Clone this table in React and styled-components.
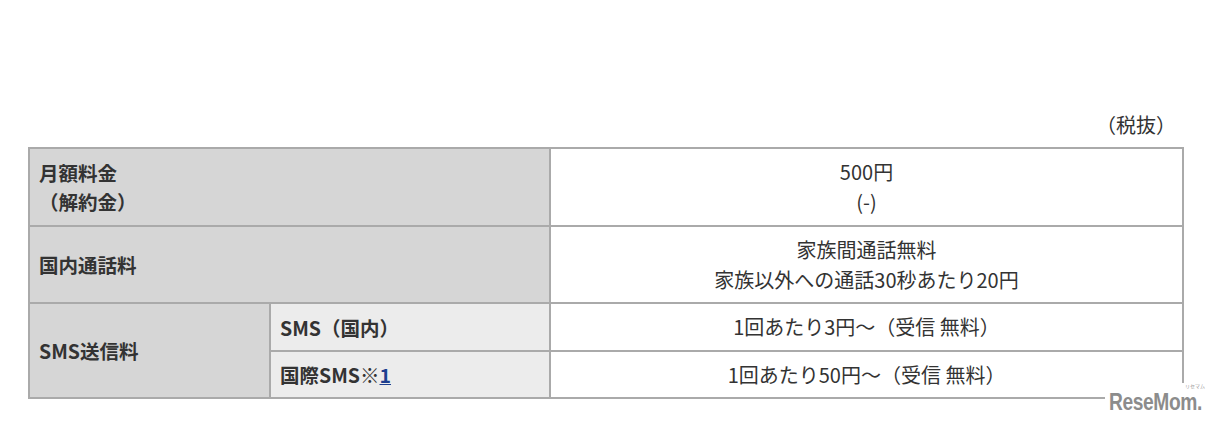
import React from 'react';
import styled, { createGlobalStyle } from 'styled-components';

const GlobalStyle = createGlobalStyle`
	html, body {
		margin: 0;
		padding: 0;
		background: #fff;
	}
	body {
		font-family: "Noto Sans CJK JP", "Noto Sans", sans-serif;
		color: #333;
	}
`;

const Page = styled.div`
	position: relative;
	width: 1217px;
	height: 425px;
	padding: 110px 0 0 28px;
	box-sizing: border-box;
	overflow: hidden;
`;

const Note = styled.div`
	width: 1154px;
	text-align: right;
	font-size: 20px;
	line-height: 30px;
	padding-right: 6px;
	box-sizing: border-box;
	margin-bottom: 7px;
	font-weight: 400;
`;

const PriceTable = styled.table`
	width: 1154px;
	border-collapse: collapse;
	table-layout: fixed;
	border: 2px solid #aaa;
`;

const Th = styled.th`
	background: ${props => (props.sub ? '#ececec' : '#d6d6d6')};
	border: 2px solid #aaa;
	text-align: left;
	font-weight: 700;
	font-size: 19.5px;
	line-height: 29px;
	padding: 0 9px;
	height: ${props => props.h}px;
	color: #333;
	vertical-align: middle;
`;

const Td = styled.td`
	background: #fff;
	border: 2px solid #aaa;
	text-align: center;
	font-weight: 400;
	font-size: 20px;
	line-height: 30px;
	padding: 0 10px;
	height: ${props => props.h}px;
	color: #333;
	vertical-align: middle;
`;

const Line = styled.div``;

const Ref = styled.a`
	color: #1d3f8f;
	text-decoration: underline;
	font-weight: 700;
`;

const Mark = styled.span`
	font-weight: 400;
`;

const Watermark = styled.div`
	position: absolute;
	left: 1105px;
	top: 383px;
	width: 112px;
	height: 42px;
	background: #fff;
`;

const LogoText = styled.div`
	position: absolute;
	left: 4px;
	top: 6px;
	font-family: "Liberation Sans", Arial, sans-serif;
	font-weight: 700;
	font-size: 24px;
	line-height: 26px;
	letter-spacing: -0.5px;
	color: #8c8c8c;
	transform: scaleX(0.8);
	transform-origin: left top;
	white-space: nowrap;
`;

const LogoKana = styled.div`
	position: absolute;
	left: 80px;
	top: 0;
	font-size: 5px;
	line-height: 6px;
	color: #999;
	white-space: nowrap;
`;

export default function App() {
	return (
		<>
			<GlobalStyle />
			<Page>
				<Note>（税抜）</Note>
				<PriceTable>
					<colgroup>
						<col style={{ width: '241px' }} />
						<col style={{ width: '280px' }} />
						<col style={{ width: '633px' }} />
					</colgroup>
					<tbody>
						<tr>
							<Th colSpan={2} h={76}>
								<Line>月額料金</Line>
								<Line>（解約金）</Line>
							</Th>
							<Td h={76}>
								<Line>500円</Line>
								<Line>(-)</Line>
							</Td>
						</tr>
						<tr>
							<Th colSpan={2} h={75}>国内通話料</Th>
							<Td h={75}>
								<Line>家族間通話無料</Line>
								<Line>家族以外への通話30秒あたり20円</Line>
							</Td>
						</tr>
						<tr>
							<Th rowSpan={2}>SMS送信料</Th>
							<Th sub h={46}>SMS（国内）</Th>
							<Td h={46}>1回あたり3円～（受信 無料）</Td>
						</tr>
						<tr>
							<Th sub h={45}>
								国際SMS<Mark>※</Mark>
								<Ref href="#note1">1</Ref>
							</Th>
							<Td h={45}>1回あたり50円～（受信 無料）</Td>
						</tr>
					</tbody>
				</PriceTable>
				<Watermark>
					<LogoKana>リセマム</LogoKana>
					<LogoText>ReseMom.</LogoText>
				</Watermark>
			</Page>
		</>
	);
}
